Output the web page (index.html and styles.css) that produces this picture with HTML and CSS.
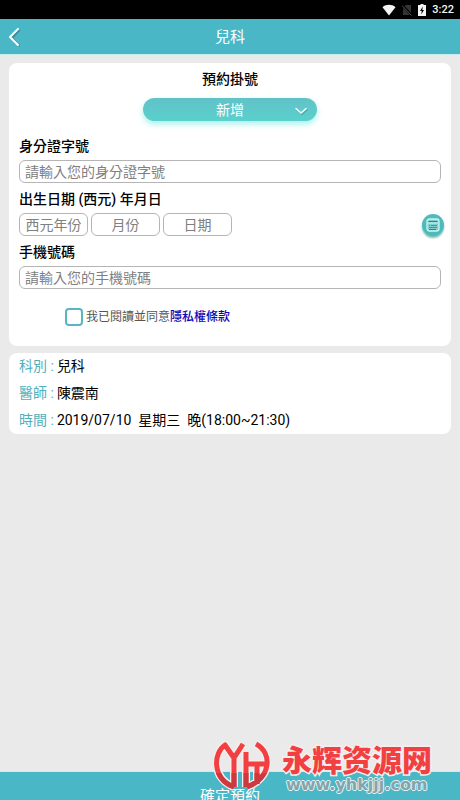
FILE: index.html
```html
<!DOCTYPE html>
<html lang="zh-Hant">
<head>
<meta charset="utf-8">
<meta name="viewport" content="width=device-width, initial-scale=1">
<title>兒科</title>
<link rel="stylesheet" href="styles.css">
</head>
<body>
<div class="status">
  <svg width="14" height="12" viewBox="0 0 14 12"><path d="M0.5 3.2C4.2 0 9.8 0 13.5 3.2L7 11.5Z" fill="#f4f4f4"/></svg>
  <svg width="10" height="12" viewBox="0 0 10 12"><path d="M3.5 1H9V11H1V4Z" fill="#353535"/><path d="M0 1L10 11.5" stroke="#000" stroke-width="2.4"/><path d="M0 1.5L9.5 11.5" stroke="#555" stroke-width="1"/></svg>
  <svg width="8" height="12" viewBox="0 0 8 12"><path d="M2.5 0H5.500V1H8V12H0V1H2.500Z" fill="#f4f4f4"/><path d="M4.800 2.500L2 7H3.800L3.200 10.500L6 6H4.300Z" fill="#000"/></svg>
  <span class="clock">3:22</span>
</div>
<header class="bar">
  <button class="back" type="button" aria-label="返回">
    <svg width="14" height="20" viewBox="0 0 14 20" fill="none" stroke-linecap="round" stroke-linejoin="round" stroke-width="2"><path d="M12 3.500L5 11L12 18.500" stroke="#3a8e9b"/><path d="M11 2L3 10L11 18" stroke="#fff"/></svg>
  </button>
  <h1 class="bar-title">兒科</h1>
</header>
<main class="content">
  <form class="card form">
    <h2 class="form-title">預約掛號</h2>
    <div class="picker">
      <select class="picker-select" aria-label="預約掛號"><option>新增</option></select>
      <svg class="picker-arrow" width="14" height="10" viewBox="0 0 14 10" fill="none" stroke-width="1.500" stroke-linecap="round" stroke-linejoin="round"><path d="M3 4L8 8.500L13 4" stroke="#48aeb2"/><path d="M2 2.500L7 7L12 2.500" stroke="#fff"/></svg>
    </div>
    <label class="label" for="idno">身分證字號</label>
    <input class="field" id="idno" type="text" placeholder="請輸入您的身分證字號">
    <label class="label" for="year">出生日期 (西元) 年月日</label>
    <div class="dates">
      <input class="field short" id="year" type="text" placeholder="西元年份">
      <input class="field short" type="text" placeholder="月份" aria-label="月份">
      <input class="field short" type="text" placeholder="日期" aria-label="日期">
      <button class="calendar" type="button" aria-label="選擇日期">
        <svg width="14" height="14" viewBox="0 0 14 14" fill="none"><rect x="1" y="1" width="12" height="12" rx="2.500" fill="#7fd0cf" stroke="#c4f7f4" stroke-width="1.300"/><path d="M2.500 3.500H11.500" stroke="#27868a"/><path d="M2 5H12" stroke="#c4f7f4"/><path d="M3 7.500H4M5 7.500H11M3 9.500H11" stroke="#399a9c"/><path d="M3 11.500H10" stroke="#27868a"/></svg>
      </button>
    </div>
    <label class="label" for="phone">手機號碼</label>
    <input class="field" id="phone" type="tel" placeholder="請輸入您的手機號碼">
    <div class="consent">
      <input class="tick" id="agree" type="checkbox">
      <label for="agree">我已閱讀並同意</label><a class="terms" href="#terms">隱私權條款</a>
    </div>
  </form>
  <dl class="card info">
    <div class="row"><dt>科別 :</dt><dd>兒科</dd></div>
    <div class="row"><dt>醫師 :</dt><dd>陳震南</dd></div>
    <div class="row"><dt>時間 :</dt><dd>2019/07/10&nbsp; 星期三&nbsp; 晚(18:00~21:30)</dd></div>
  </dl>
</main>
<button class="submit" type="button">確定預約</button>
<div class="mark">
  <svg width="58" height="52" viewBox="4 5 58 52" fill="none" stroke-linejoin="round">
    <defs>
      <path id="logo" d="M24 51C2 43 3 17 15 9L24 22L33 8M24 22V51M36 51V16M36 28H56M47 28V48M46 8C63 17 61 42 37 51"/>
      <clipPath id="low"><path d="M0 37H66V64H0Z"/></clipPath>
    </defs>
    <use href="#logo" stroke="#f4eeee" stroke-width="8"/>
    <use href="#logo" stroke="#f23f42" stroke-width="5"/>
    <use href="#logo" stroke="#cc393e" stroke-width="5" clip-path="url(#low)"/>
  </svg>
  <div class="mark-text">
    <span class="mark-name" lang="zh-Hans">永辉资源网</span>
    <span class="mark-url">www.yhkjjj.com</span>
  </div>
</div>
</body>
</html>
```

FILE: styles.css
```css
* { box-sizing: border-box; }

body {
  margin: 0;
  height: 100vh;
  display: flex;
  flex-direction: column;
  position: relative;
  overflow: hidden;
  background: #eaeaea;
  color: #000;
  font: 14px/20px Roboto, "Noto Sans CJK TC", sans-serif;
}

button, input, select { font: inherit; margin: 0; }

.status {
  flex: none;
  display: flex;
  align-items: center;
  justify-content: flex-end;
  gap: 6px;
  height: 19px;
  padding-right: 6px;
  background: #000;
}

.clock {
  color: #f4f4f4;
  font-size: 11px;
  font-weight: 500;
}

.bar {
  flex: none;
  display: grid;
  grid-template-columns: 28px 1fr 28px;
  align-items: center;
  height: 36px;
  background: #4ab7c7;
  border-bottom: 1px solid #c9eef0;
}

.back {
  display: flex;
  padding: 0 0 0 7px;
  border: 0;
  background: none;
}

.bar-title {
  margin: 0;
  color: #fff;
  font-size: 15px;
  font-weight: 400;
  text-align: center;
}

.content {
  flex: 1;
  display: flex;
  flex-direction: column;
  gap: 7px;
  padding: 8px 9px;
}

.card {
  margin: 0;
  background: #fff;
  border-radius: 8px;
}

.form {
  display: flex;
  flex-direction: column;
  padding: 6px 10px 19px;
}

.form-title {
  margin: 0 0 9px;
  font-size: 14px;
  font-weight: 500;
  text-align: center;
}

.picker {
  position: relative;
  align-self: center;
  width: 41%;
  margin-bottom: 9px;
}

.picker-select {
  display: block;
  width: 100%;
  height: 23px;
  padding: 0;
  appearance: none;
  border: 0;
  border-radius: 12px;
  background: linear-gradient(#61c2c8, #5ad0cc);
  box-shadow: 0 3px 6px #a5f0ec;
  color: #fff;
  text-align: center;
  text-align-last: center;
}

.picker-arrow {
  position: absolute;
  right: 9px;
  top: 8px;
  pointer-events: none;
}

.label {
  margin: 6px 0 4px;
  font-weight: 500;
}

.field {
  width: 100%;
  height: 23px;
  padding: 0 5px;
  border: 1px solid #b5b5b5;
  border-radius: 6px;
  background: #fff;
}

.field::placeholder { color: #808080; opacity: 1; }

.dates {
  display: flex;
  align-items: center;
  gap: 3px;
}

.short {
  width: 69px;
  padding: 0;
  text-align: center;
}

.calendar {
  display: flex;
  align-items: center;
  justify-content: center;
  width: 22px;
  height: 22px;
  margin: 0 -3px 0 auto;
  padding: 0;
  border: 0;
  border-radius: 50%;
  background: #50babb;
  box-shadow: 0 2px 2px #7cbcbb;
}

.consent {
  display: flex;
  align-items: center;
  margin: 18px 0 0 46px;
  color: #555;
  font-size: 12px;
}

.tick {
  width: 18px;
  height: 18px;
  margin-right: 3px;
  appearance: none;
  border: 2px solid #58b6c0;
  border-radius: 4px;
  background: #fff;
}

.tick:checked { background: #58b6c0; }

.terms {
  color: #0a05b5;
  font-weight: 500;
  text-decoration: none;
}

.info { padding: 0 10px; }

.row {
  display: flex;
  gap: 3px;
  line-height: 27px;
}

.row dt { color: #4fb0bb; }

.row dd { margin: 0; }

.submit {
  flex: none;
  height: 29px;
  padding: 14px 0 0;
  overflow: hidden;
  border: 0;
  border-top: 1px solid #c9eef0;
  background: #4ab7c7;
  color: #fff;
  font-size: 15px;
  line-height: 20px;
}

.mark {
  position: absolute;
  right: 28px;
  bottom: 7px;
  display: flex;
  align-items: flex-end;
  gap: 10px;
  pointer-events: none;
}

.mark-text {
  display: flex;
  flex-direction: column;
  gap: 4px;
  font-weight: 700;
}

.mark-name {
  color: #f23f42;
  font-family: "Noto Sans CJK SC", sans-serif;
  font-size: 30px;
  font-weight: 900;
  line-height: 30px;
  paint-order: stroke fill;
  -webkit-text-stroke: 3px #f4eeee;
}

.mark-url {
  padding-left: 4px;
  color: #87a3aa;
  font-family: "DejaVu Sans", sans-serif;
  font-size: 16px;
  line-height: 16px;
  text-shadow: 1px 0 #e4f2f4, -1px 0 #e4f2f4, 0 1px #e4f2f4, 0 -1px #e4f2f4;
}
```
